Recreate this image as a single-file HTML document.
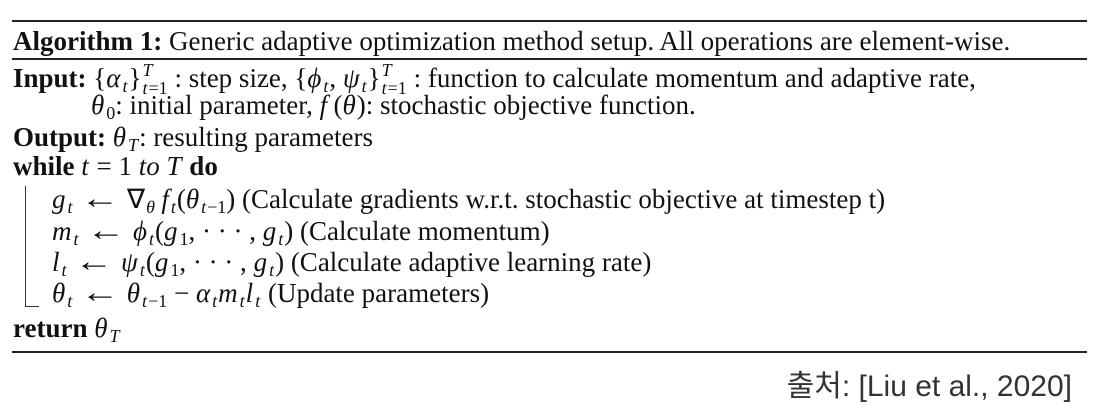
<!DOCTYPE html>
<html><head><meta charset="utf-8"><style>
body{margin:0;background:#fff;width:1102px;height:418px;position:relative;overflow:hidden;font-family:"Liberation Serif",serif;color:#111;font-size:27px}
.l{position:absolute;white-space:nowrap;line-height:27px}
.r{position:absolute;left:12px;width:1075px;background:#222}
i{font-style:italic;margin-right:1px}
sub,sup{font-size:18px;line-height:0}
sub{vertical-align:-5px;margin-left:1px}
sup{vertical-align:10px}
.ss{position:relative;display:inline-block;height:0;font-size:18px;line-height:18px;vertical-align:baseline}
.ss span{position:absolute;left:1px}
.ss .p{top:-26px}.ss .b{top:-8px}
b{font-weight:bold}
.a{font-size:30px;margin:0 5px;display:inline-block;transform:scaleX(1.3)}
</style></head><body>
<div class="r" style="top:20px;height:2px"></div>
<div class="l" style="left:13px;top:28px"><b>Algorithm 1:</b> Generic adaptive optimization method setup. All operations are element-wise.</div>
<div class="r" style="top:58px;height:1.5px"></div>
<div class="l" style="left:13px;top:65px"><b>Input:</b> {<i>α</i><sub><i>t</i></sub>}<span class="ss" style="width:33px"><span class="p"><i>T</i></span><span class="b"><i>t</i>=1</span></span>: step size, {<i>ϕ</i><sub><i>t</i></sub>, <i>ψ</i><sub><i>t</i></sub>}<span class="ss" style="width:33px"><span class="p"><i>T</i></span><span class="b"><i>t</i>=1</span></span>: function to calculate momentum and adaptive rate,</div>
<div class="l" style="left:91px;top:92px"><i>θ</i><sub>0</sub>: initial parameter, <i>f</i>&thinsp;(<i>θ</i>): stochastic objective function.</div>
<div class="l" style="left:13px;top:124px"><b>Output:</b> <i>θ</i><sub><i>T</i></sub>: resulting parameters</div>
<div class="l" style="left:13px;top:153px"><b>while</b> <i>t</i> = 1 <i>to T</i> <b>do</b></div>
<div style="position:absolute;left:25px;top:186px;width:1px;height:121px;background:#333"></div>
<div style="position:absolute;left:25px;top:306px;width:14px;height:1px;background:#333"></div>
<div class="l" style="left:52px;top:185px"><i>g</i><sub><i>t</i></sub> <span class="a">←</span> ∇<sub><i>θ</i></sub>&thinsp;<i>f</i><sub><i>t</i></sub>(<i>θ</i><sub><i>t</i>−1</sub>) (Calculate gradients w.r.t. stochastic objective at timestep t)</div>
<div class="l" style="left:52px;top:217px"><i>m</i><sub><i>t</i></sub> <span class="a">←</span> <i>ϕ</i><sub><i>t</i></sub>(<i>g</i><sub>1</sub>, · · · , <i>g</i><sub><i>t</i></sub>) (Calculate momentum)</div>
<div class="l" style="left:52px;top:248px"><i>l</i><sub><i>t</i></sub> <span class="a">←</span> <i>ψ</i><sub><i>t</i></sub>(<i>g</i><sub>1</sub>, · · · , <i>g</i><sub><i>t</i></sub>) (Calculate adaptive learning rate)</div>
<div class="l" style="left:52px;top:279px"><i>θ</i><sub><i>t</i></sub> <span class="a">←</span> <i>θ</i><sub><i>t</i>−1</sub> − <i>α</i><sub><i>t</i></sub><i>m</i><sub><i>t</i></sub><i>l</i><sub><i>t</i></sub> (Update parameters)</div>
<div class="l" style="left:13px;top:315px"><b>return</b> <i>θ</i><sub><i>T</i></sub></div>
<div class="r" style="top:351px;height:2px"></div>
<div class="l" style="right:30px;top:370px;font-family:'Liberation Sans','Noto Sans CJK KR',sans-serif;font-size:30px;line-height:34px;color:#333">출처: [Liu et al., 2020]</div>
</body></html>
